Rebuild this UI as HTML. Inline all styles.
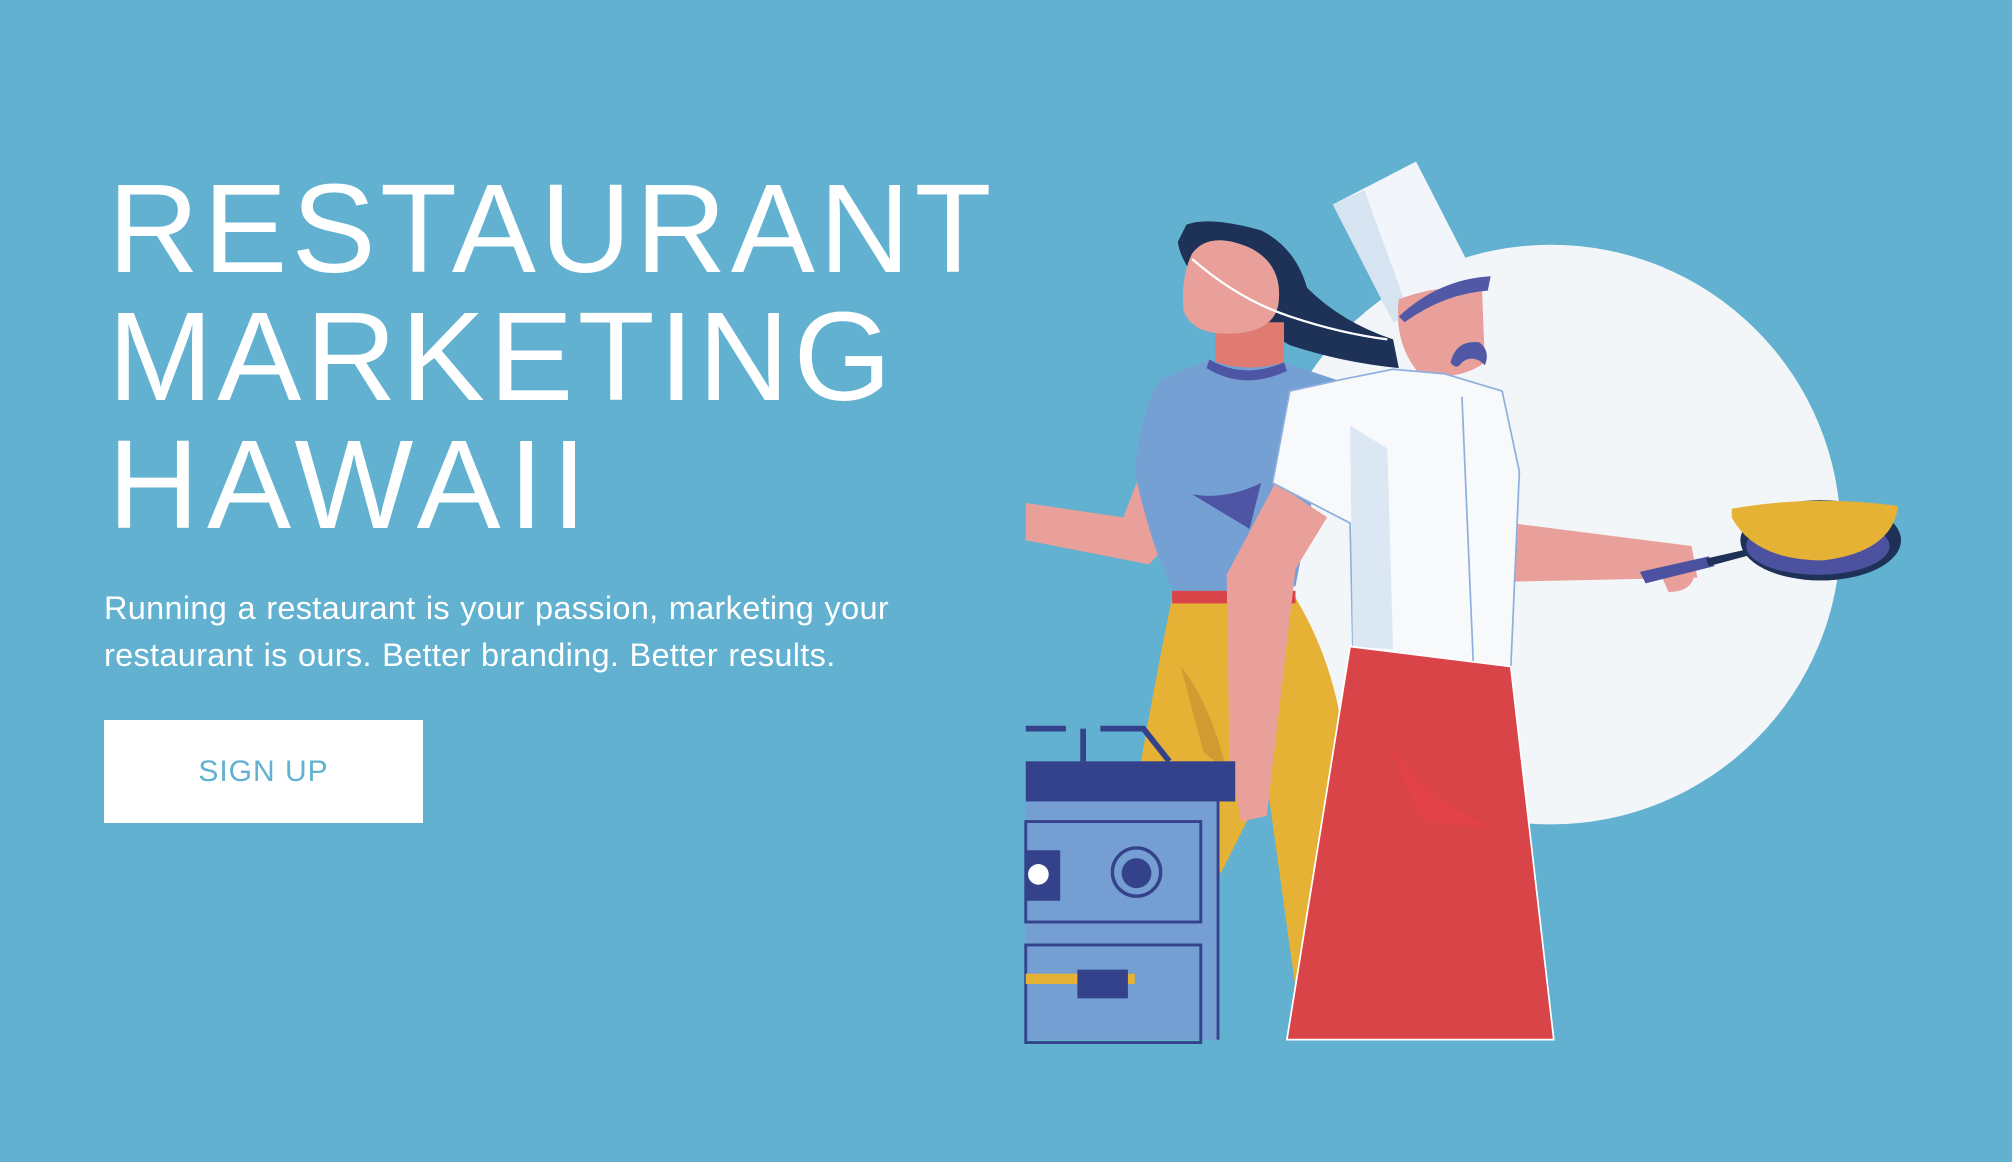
<!DOCTYPE html>
<html><head><meta charset="utf-8">
<style>
html,body{margin:0;padding:0}
body{width:2012px;height:1162px;background:#62b1d0;position:relative;overflow:hidden;font-family:"Liberation Sans",sans-serif}
h1{position:absolute;left:108px;top:165px;margin:0;font-weight:normal;font-size:126px;line-height:128px;color:#fff;letter-spacing:4.3px;white-space:nowrap}
p{position:absolute;left:104px;top:585px;margin:0;font-size:32.5px;line-height:47px;color:#fff;white-space:nowrap;word-spacing:1px;letter-spacing:0.3px}
.btn{position:absolute;left:104px;top:720px;width:319px;height:103px;background:#fff;color:#62b1d0;font-size:30px;line-height:103px;text-align:center;letter-spacing:1px}
svg{position:absolute;left:1020px;top:150px;width:900px;height:900px}
</style></head><body>
<h1>RESTAURANT<br>MARKETING<br><span style="letter-spacing:8px">HAWAII</span></h1>
<p>Running a restaurant is your passion, marketing your<br>restaurant is ours. Better branding. Better results.</p>
<div class="btn">SIGN UP</div>
<svg viewBox="0 0 1568 1568" xmlns="http://www.w3.org/2000/svg">
<circle cx="925" cy="670" r="505" fill="#f3f6f9"/>
<path d="M290 130 Q330 115 420 140 Q480 170 500 240 Q560 300 650 330 L660 380 Q560 370 470 340 Q400 300 330 250 Q280 200 275 160 Z" fill="#1e3157"/>
<path d="M340 300 L460 300 L460 380 L340 385 Z" fill="#e07b72"/>
<path d="M300 180 Q330 140 400 170 Q460 200 450 270 Q440 320 360 320 Q300 320 285 280 Q280 220 300 180 Z" fill="#eaa09a"/>
<path d="M300 190 Q380 260 470 290 Q560 320 640 330" stroke="#fff" stroke-width="4" fill="none"/>
<path d="M10 615 L180 640 L205 575 L245 700 L225 722 L10 680 Z" fill="#eaa09a"/>
<path d="M265 780 L480 780 Q540 880 560 1000 L540 1550 L480 1460 L430 1100 L350 1260 L210 1070 Q240 900 265 780 Z" fill="#e5b236"/>
<path d="M280 900 Q330 960 360 1080 L320 1050 Z" fill="#d49a32"/>
<path d="M245 400 L330 365 Q390 390 460 370 L565 405 L530 500 L480 760 L270 772 Q230 700 200 560 Q210 450 245 400 Z" fill="#75a0d4"/>
<path d="M330 365 Q390 400 460 370 L465 385 Q390 420 325 380 Z" fill="#4e55a4"/>
<path d="M300 600 Q360 610 420 580 L400 660 Z" fill="#4e55a4"/>
<rect x="265" y="768" width="215" height="22" fill="#d94448"/>
<path d="M545 95 L690 20 L790 215 L660 300 L640 280 Z" fill="#f2f6fb"/>
<path d="M545 95 L600 70 L680 290 L650 300 Z" fill="#d6e3f0"/>
<path d="M660 260 Q740 230 805 245 L810 370 Q770 400 700 395 Q650 340 660 260 Z" fill="#eaa09a"/>
<path d="M660 290 Q730 225 820 220 L815 245 Q740 250 670 300 Z" fill="#5159a6"/>
<path d="M750 370 Q760 330 800 335 Q820 350 810 375 Q790 355 770 370 Q760 385 750 370 Z" fill="#5159a6"/>
<path d="M445 580 L535 640 L480 730 L430 1160 L385 1170 L365 1060 L360 740 Z" fill="#eaa09a"/>
<path d="M855 650 L1170 690 L1180 745 L855 752 Z" fill="#eaa09a"/>
<path d="M1110 725 Q1150 720 1175 740 Q1170 770 1130 770 Z" fill="#eaa09a"/>
<path d="M470 420 L560 400 L650 382 L740 390 L840 420 L870 560 L855 905 L580 870 L575 650 L440 580 Z" fill="#f7f9fb" stroke="#8fb0dd" stroke-width="3"/>
<path d="M575 480 L640 520 L650 870 L580 865 Z" fill="#dbe8f4"/>
<path d="M770 430 L790 900" stroke="#8fb0dd" stroke-width="3"/>
<path d="M575 865 L855 900 L930 1550 L465 1550 Z" fill="#d94448" stroke="#fff" stroke-width="3"/>
<path d="M630 1000 Q680 1120 820 1180 L700 1170 Z" fill="#e8414a" opacity=".7"/>
<path d="M1080 735 L1200 708 L1210 725 L1090 755 Z" fill="#4c52a0"/>
<path d="M1195 712 L1270 695 L1275 705 L1200 725 Z" fill="#1e3157"/>
<ellipse cx="1395" cy="680" rx="140" ry="70" fill="#1e3157"/>
<ellipse cx="1390" cy="690" rx="125" ry="50" fill="#4c52a0"/>
<path d="M1240 625 Q1380 600 1530 620 Q1520 700 1400 715 Q1280 715 1240 640 Z" fill="#e5b236"/>
<path d="M10 1008 L80 1008 M140 1008 L215 1008 L260 1065 M110 1008 L110 1065" stroke="#33428a" stroke-width="10" fill="none"/>
<rect x="10" y="1065" width="365" height="70" fill="#33428a"/>
<rect x="10" y="1135" width="335" height="415" fill="#759fd3"/>
<rect x="10" y="1170" width="305" height="175" fill="none" stroke="#33428a" stroke-width="5"/>
<rect x="10" y="1385" width="305" height="170" fill="none" stroke="#33428a" stroke-width="5"/>
<line x1="345" y1="1135" x2="345" y2="1550" stroke="#33428a" stroke-width="5"/>
<rect x="10" y="1220" width="60" height="88" fill="#33428a"/>
<circle cx="32" cy="1262" r="18" fill="#fff"/>
<circle cx="203" cy="1258" r="42" fill="none" stroke="#33428a" stroke-width="6"/>
<circle cx="203" cy="1260" r="26" fill="#33428a"/>
<rect x="10" y="1435" width="190" height="18" fill="#e5b236"/>
<rect x="100" y="1428" width="88" height="50" fill="#33428a"/>
</svg>
</body></html>
